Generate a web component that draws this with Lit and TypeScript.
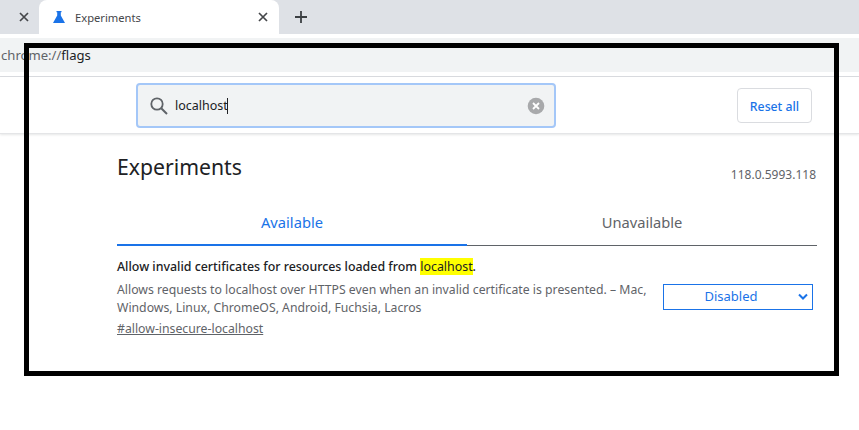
import { LitElement, html, css } from "lit";
import { customElement } from "lit/decorators.js";

@customElement("app-root")
export class AppRoot extends LitElement {
  static styles = css`
    :host {
      display: block;
      position: relative;
      width: 859px;
      height: 430px;
      overflow: hidden;
      background: #fff;
      font-family: "Noto Sans", "Open Sans", sans-serif;
      color: #202124;
    }
    .strip {
      height: 34px;
      background: #dee1e6;
      display: flex;
      align-items: stretch;
      padding-left: 0;
    }
    .stub {
      width: 39px;
      display: flex;
      align-items: center;
      justify-content: flex-end;
      padding-right: 9px;
      box-sizing: border-box;
    }
    .tab {
      width: 240px;
      background: #fff;
      border-radius: 8px 8px 0 0;
      display: flex;
      align-items: center;
      padding: 0 10px 0 13px;
      box-sizing: border-box;
      font-size: 11.2px;
      color: #45474a;
    }
    .tab .title { flex: 1; margin-left: 9px; }
    .plus { margin-left: 15px; display: flex; align-items: center; }
    .gap { height: 4px; background: #fff; }
    .address {
      height: 34px;
      background: #f1f3f4;
      display: flex;
      align-items: center;
      padding-left: 1px;
      font-size: 13.1px;
      color: #5f6368;
    }
    .address b { font-weight: 400; color: #202124; }
    .sep { height: 1px; margin-top: 4px; background: #dadce0; }
    .header {
      height: 57px;
      box-sizing: border-box;
      padding: 6px 47px 0 136px;
      display: flex;
      align-items: flex-start;
      justify-content: space-between;
      border-bottom: 1px solid #e4e5e7;
      box-shadow: 0 1px 2px rgba(60, 64, 67, 0.12);
    }
    .search {
      width: 420px;
      height: 45px;
      box-sizing: border-box;
      border: 2px solid #a4c7f8;
      border-radius: 4px;
      background: #f1f3f4;
      display: flex;
      align-items: center;
      padding: 0 9px 0 11px;
      font-size: 12.5px;
    }
    .query { flex: 1; margin-left: 6px; display: flex; align-items: center; color: #202124; }
    .caret { width: 1px; height: 16px; background: #202124; margin-left: -1px; }
    .reset {
      width: 75px;
      height: 35px;
      margin-top: 5px;
      box-sizing: border-box;
      border: 1px solid #dadce0;
      border-radius: 4px;
      background: #fff;
      color: #1a73e8;
      font: 500 12.25px "Noto Sans", sans-serif;
      padding: 1px 0 0;
    }
    .main { width: 700px; margin-left: 117px; }
    .head {
      display: flex;
      justify-content: space-between;
      align-items: flex-start;
      height: 64px;
      padding-top: 18px;
      box-sizing: border-box;
    }
    h1 { margin: 0; font-size: 21.2px; font-weight: 400; line-height: 30px; color: #202124; }
    .version { font-size: 12px; line-height: 16px; margin: 15px 1px 0 0; color: #5f6368; }
    .tabs { display: flex; margin-top: 0; }
    .t {
      flex: 1;
      height: 48px;
      box-sizing: border-box;
      text-align: center;
      font-size: 14.7px;
      line-height: 20px;
      padding-top: 14px;
      color: #5f6368;
      border-bottom: 1px solid #5f6368;
    }
    .t.on { color: #1a73e8; border-bottom: 2px solid #1a73e8; }
    .flag {
      display: flex;
      justify-content: space-between;
      padding-top: 12px;
    }
    .info { width: 535px; }
    .name { font-size: 12.4px; font-weight: 500; line-height: 18px; color: #202124; }
    mark { background: #ffff00; color: #202124; font-weight: 400; }
    .desc { font-size: 12.25px; line-height: 18px; color: #5f6368; margin-top: 5px; }
    .link {
      display: block;
      font-size: 12.25px;
      line-height: 18px;
      color: #5f6368;
      text-decoration: underline;
      margin-top: 3px;
    }
    .select {
      width: 150px;
      height: 26px;
      margin: 26px 4px 0 0;
      box-sizing: border-box;
      border: 1px solid #1a73e8;
      display: flex;
      align-items: center;
      justify-content: center;
      position: relative;
      font-size: 13px;
      color: #1a73e8;
      padding: 0 14px 2px 0;
    }
    .chev { position: absolute; right: 4px; top: 8px; }
    .frame {
      position: absolute;
      left: 24px;
      top: 43px;
      width: 815px;
      height: 333px;
      box-sizing: border-box;
      border: 5px solid #000;
      pointer-events: none;
    }
    svg { display: block; }
  `;

  private close() {
    return html`<svg width="12" height="12" viewBox="0 0 12 12"><path d="M2 2l8 8M10 2l-8 8" stroke="#45474a" stroke-width="1.7" fill="none"/></svg>`;
  }

  render() {
    return html`
      <div class="strip">
        <div class="stub">${this.close()}</div>
        <div class="tab">
          <svg width="14" height="14" viewBox="0 0 14 14"><path d="M4.5 1h5v1.2H8.8v3.2L13 13H1l4.200-7.600V2.200H4.500z" fill="#1a73e8"/></svg>
          <span class="title">Experiments</span>
          ${this.close()}
        </div>
        <div class="plus"><svg width="14" height="14" viewBox="0 0 14 14"><path d="M7 1v12M1 7h12" stroke="#3c4043" stroke-width="1.800" fill="none"/></svg></div>
      </div>
      <div class="gap"></div>
      <div class="address"><span>chrome://<b>flags</b></span></div>
      <div class="sep"></div>
      <div class="header">
        <div class="search">
          <svg width="20" height="20" viewBox="0 0 20 20"><circle cx="8" cy="8" r="5.700" stroke="#5f6368" stroke-width="1.800" fill="none"/><path d="M12.200 12.200L18 18" stroke="#5f6368" stroke-width="2" fill="none"/></svg>
          <div class="query"><span>localhost</span><span class="caret"></span></div>
          <svg width="18" height="18" viewBox="0 0 18 18"><circle cx="9" cy="9" r="8.300" fill="#a8a9ab"/><path d="M6 6l6 6M12 6l-6 6" stroke="#fff" stroke-width="1.800" fill="none"/></svg>
        </div>
        <button class="reset">Reset all</button>
      </div>
      <div class="main">
        <div class="head">
          <h1>Experiments</h1>
          <div class="version">118.0.5993.118</div>
        </div>
        <div class="tabs">
          <div class="t on">Available</div>
          <div class="t">Unavailable</div>
        </div>
        <div class="flag">
          <div class="info">
            <div class="name">Allow invalid certificates for resources loaded from <mark>localhost</mark>.</div>
            <div class="desc">Allows requests to localhost over HTTPS even when an invalid certificate is presented. – Mac, Windows, Linux, ChromeOS, Android, Fuchsia, Lacros</div>
            <a class="link">#allow-insecure-localhost</a>
          </div>
          <div class="select">Disabled
            <svg class="chev" width="10" height="8" viewBox="0 0 10 8"><path d="M1 1.500l4 4 4-4" stroke="#1a73e8" stroke-width="2" fill="none"/></svg>
          </div>
        </div>
      </div>
      <div class="frame"></div>
    `;
  }
}
